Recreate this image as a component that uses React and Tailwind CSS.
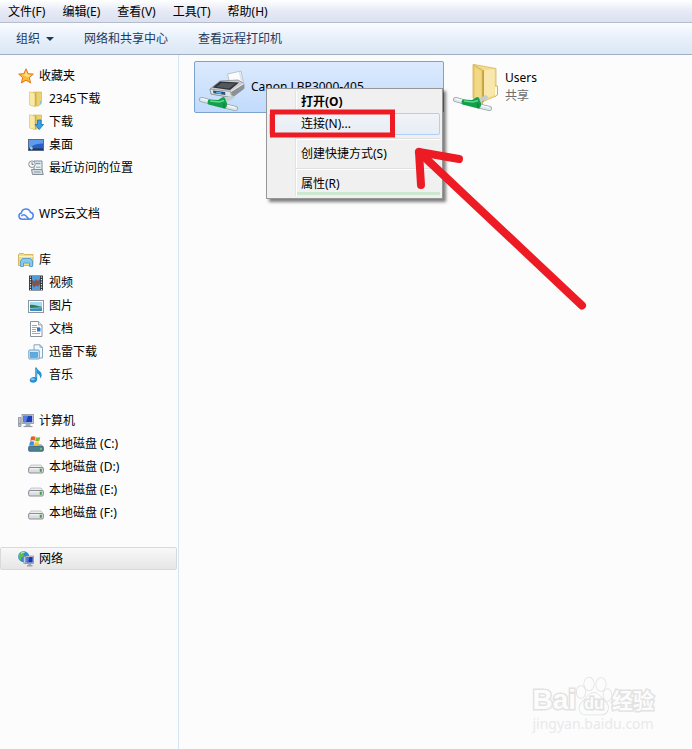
import { useState } from 'react'

const menus = ['文件(F)', '编辑(E)', '查看(V)', '工具(T)', '帮助(H)']

const groups = [
  {
    label: '收藏夹', icon: StarIcon,
    items: [
      { label: '2345下载', icon: FolderIcon },
      { label: '下载', icon: DownloadIcon },
      { label: '桌面', icon: DesktopIcon },
      { label: '最近访问的位置', icon: RecentIcon },
    ],
  },
  { label: 'WPS云文档', icon: CloudIcon, items: [] },
  {
    label: '库', icon: LibraryIcon,
    items: [
      { label: '视频', icon: VideoIcon },
      { label: '图片', icon: PictureIcon },
      { label: '文档', icon: DocumentIcon },
      { label: '迅雷下载', icon: ThunderIcon },
      { label: '音乐', icon: MusicIcon },
    ],
  },
  {
    label: '计算机', icon: ComputerIcon,
    items: [
      { label: '本地磁盘 (C:)', icon: SystemDriveIcon },
      { label: '本地磁盘 (D:)', icon: DriveIcon },
      { label: '本地磁盘 (E:)', icon: DriveIcon },
      { label: '本地磁盘 (F:)', icon: DriveIcon },
    ],
  },
  { label: '网络', icon: NetworkIcon, items: [] },
]

function Icon({ children }) {
  return <svg viewBox="0 0 16 16" className="w-4 h-4 shrink-0" aria-hidden="true">{children}</svg>
}

function StarIcon() {
  return (
    <Icon>
      <path d="M8 .8l2.1 4.9 5.2.4-4 3.5 1.3 5.3L8 12.2l-4.6 2.7 1.3-5.3-4-3.5 5.2-.4z" fill="#fdb93a" stroke="#e2761b" strokeLinejoin="round" />
      <path d="M8 3l1.300 3.500 3.700.4-3 2.400L5 7 3.500 6.800 6.800 6.400z" fill="#ffe48a" />
    </Icon>
  )
}

function FolderShape() {
  return (
    <>
      <path d="M5 1h8.500v11l-3 3H5z" fill="#ecd170" stroke="#cfae4c" strokeWidth=".6" />
      <path d="M1.500.8L7 2v13.500L1.500 14z" fill="#f9e9a4" stroke="#d9bd62" strokeWidth=".6" />
      <path d="M7 2l1.500-.8v13L7 15.500z" fill="#cfae48" />
    </>
  )
}

function FolderIcon() {
  return (
    <Icon>
      <FolderShape />
      <path d="M12.500 10v3.500" stroke="#7fc4e8" strokeWidth="1.200" />
    </Icon>
  )
}

function DownloadIcon() {
  return (
    <Icon>
      <FolderShape />
      <path d="M9.500 6h3.600v4.500h2.400L11.300 15.500 7.100 10.500h2.400z" fill="#35a3e6" stroke="#1a6fb4" strokeWidth=".8" strokeLinejoin="round" />
    </Icon>
  )
}

function DesktopIcon() {
  return (
    <Icon>
      <rect x=".5" y="2.500" width="15" height="11" fill="#2a62c4" stroke="#5b6a82" />
      <path d="M1 3h14v3.500C9 6 5 8.500 1 10.500z" fill="#5f9bea" />
      <path d="M1 12.200h14" stroke="#1b3163" strokeWidth="1.500" />
      <circle cx="3.200" cy="11" r="1.400" fill="#7fd3f3" />
      <path d="M3 11h1.500v1.500H3z" fill="#f1c64a" />
    </Icon>
  )
}

function RecentIcon() {
  return (
    <Icon>
      <path d="M6 1h8v10H6z" fill="#eef3f8" stroke="#7d8996" />
      <path d="M8 3.500h4.500" stroke="#6aa5d6" strokeWidth="1.500" />
      <path d="M8 7.200h4.500" stroke="#79b56f" />
      <path d="M3.500 9.500h10.300l1.500 5H4.500z" fill="#d5dbe1" stroke="#858d96" />
      <path d="M6 12h6.500" stroke="#8d98a4" />
      <circle cx="4" cy="4.200" r="3.300" fill="#f4f6f8" stroke="#8a939d" />
      <path d="M4 2.200v2.200h1.700" stroke="#54606c" strokeWidth=".8" fill="none" />
    </Icon>
  )
}

function CloudIcon() {
  return (
    <Icon>
      <path d="M6.500 13.200H4a3.200 3.200 0 0 1-.6-6.300 4.600 4.600 0 0 1 9-.6 3.500 3.500 0 0 1-.2 6.900c-1.500 0-2.200-.8-3-1.900-1-1.400-1.900-2.600-3.400-2.600-1.300 0-2 .7-2.300 1.600" fill="none" stroke="#4a86ec" strokeWidth="1.500" strokeLinejoin="round" />
      <path d="M6 13.200h5" stroke="#4a86ec" strokeWidth="1.500" />
    </Icon>
  )
}

function LibraryIcon() {
  return (
    <Icon>
      <path d="M.5 2.500L1.500 1.500h4l1 1h8.500v11H.5z" fill="#f2dc85" stroke="#cba94a" strokeWidth=".8" />
      <path d="M1 4.500h14" stroke="#fff3bd" />
      <path d="M2.500 14.500V9L4.500 6.500h8L14.500 9v5.500h-3V11H5.500v3.500z" fill="#86c9ee" stroke="#4a97c9" strokeWidth=".8" />
    </Icon>
  )
}

function VideoIcon() {
  return (
    <Icon>
      <rect x="1" y=".5" width="14" height="15" fill="#33373d" />
      <rect x="4" y="1" width="8" height="6.500" fill="#4d9fdb" />
      <rect x="4" y="8.500" width="8" height="6.500" fill="#4d9fdb" />
      <path d="M4 5l3 1 1-2 1.500 2L12 4v3.500H4zM4 9h8l-2 2.500-2-1-2 2z" fill="#8c5044" />
      <path d="M2.500 1.500v14M13.500 1.500v14" stroke="#e8eaec" strokeWidth="1.200" strokeDasharray="1.200 1.300" />
    </Icon>
  )
}

function PictureIcon() {
  return (
    <Icon>
      <rect x=".5" y="2.500" width="15" height="12" fill="#fff" stroke="#8d969f" />
      <rect x="2" y="4" width="12" height="9" fill="#a6dbf6" />
      <path d="M2 7c3-.8 7 1 12 1.800V10H2z" fill="#2f7d4d" />
      <path d="M2 10h12v3H2z" fill="#3c8ec2" />
      <path d="M2 10.500l12-.8" stroke="#8ed0d8" strokeWidth=".8" />
    </Icon>
  )
}

function DocumentIcon() {
  return (
    <Icon>
      <path d="M2.500.5h8l3.500 3.500v11.500H2.500z" fill="#fff" stroke="#8a939c" />
      <path d="M10.500.5V4H14" fill="#dfe6ec" stroke="#8a939c" strokeWidth=".8" />
      <path d="M4 4.500h5M4 6.500h8M4 8.500h4M4 10.500h4M4 12.500h8" stroke="#9fa9b3" />
      <rect x="9" y="7" width="3.500" height="3.500" fill="#2e78cc" />
    </Icon>
  )
}

function ThunderIcon() {
  return (
    <Icon>
      <path d="M6 .8h6l2.500 2.500V14H6z" fill="#f2f8fd" stroke="#7b9dbb" strokeWidth=".9" />
      <path d="M12 .8v2.500h2.500" fill="none" stroke="#7b9dbb" strokeWidth=".8" />
      <rect x=".8" y="6" width="10.500" height="9" rx=".8" fill="#d3e9f8" stroke="#6c96b8" strokeWidth=".9" />
      <rect x="2.500" y="8.500" width="7" height="4.800" fill="#58ade6" stroke="#3e8cc8" strokeWidth=".6" />
    </Icon>
  )
}

function MusicIcon() {
  return (
    <Icon>
      <path d="M7.200.5h1.500c.5 2.700 5.300 4 5 7.700-.2 1.700-1 2.700-1.800 3.200.6-2.700-.9-4.200-2.700-5v6c0 2-2 3.300-4.200 3.300-1.900 0-3.300-1-3.300-2.500 0-1.800 2-3.200 4.200-3.200.5 0 1 .1 1.300.3z" fill="#2b8fd3" />
      <path d="M8.200 2v8.500" stroke="#8bcdf2" strokeWidth=".6" />
      <ellipse cx="4.800" cy="12.300" rx="2" ry="1" fill="#82cdf5" />
    </Icon>
  )
}

function ComputerIcon() {
  return (
    <Icon>
      <path d="M.5 4.500h2.500v9H.5z" fill="#bfc5cc" stroke="#7d858e" strokeWidth=".7" />
      <path d="M1.700 10v1.500" stroke="#4fae48" />
      <rect x="4" y="1.500" width="11.500" height="9" fill="#d6dade" stroke="#8b939b" strokeWidth=".8" />
      <rect x="5.200" y="2.700" width="9" height="6.600" fill="#1d3fb5" />
      <path d="M5.200 2.700h4.800L8 9.300H5.200z" fill="#587fe0" />
      <path d="M8 10.800h4l.8 2.400H7z" fill="#a8afb6" />
      <path d="M5.500 13.600h9" stroke="#8b939b" />
    </Icon>
  )
}

function DriveIcon() {
  return (
    <Icon>
      <path d="M3 6h10l2.500 3.500H.5z" fill="#eceef0" stroke="#a3a8ad" strokeWidth=".6" />
      <rect x=".6" y="8.500" width="14.800" height="5.500" rx="1.300" fill="#d9dce0" stroke="#7f858b" strokeWidth=".9" />
      <path d="M2 9.800h9" stroke="#f8f9fa" />
      <rect x="11.800" y="9.800" width="2" height="3" fill="#36a834" />
    </Icon>
  )
}

function SystemDriveIcon() {
  return (
    <Icon>
      <path d="M2.500 8h11l2 3H.5z" fill="#a9c3cf" />
      <rect x=".6" y="10.300" width="14.800" height="5" rx="1.200" fill="#4f7f95" stroke="#395c6d" strokeWidth=".8" />
      <rect x="12" y="11.800" width="2" height="2" fill="#5fd148" />
      <path d="M3 .8C4.700-.2 6.200.2 7.500.8l-.9 4c-1.500-.6-2.900-.6-4.300.1z" fill="#ee5a2b" />
      <path d="M8 1.200c1.500.6 2.800.5 4.300-.2l-1 4c-1.500.7-2.800.6-4.200 0z" fill="#7dbb35" />
      <path d="M2 5.700c1.500-.7 2.900-.6 4.300 0l-.9 3.700c-1.500-.6-2.800-.6-4.200.1z" fill="#3c8ee0" />
      <path d="M6.900 5.900c1.400.6 2.700.7 4.200 0l-.9 3.700c-1.500.7-2.800.6-4.200 0z" fill="#f8c52c" />
    </Icon>
  )
}

function NetworkIcon() {
  return (
    <Icon>
      <circle cx="5.700" cy="5.700" r="5.500" fill="#2f86d6" />
      <path d="M1 3c2-2.800 5-3 6.500-2.500L5.500 3 6 4.500 3.500 6.500 3 10C.5 8 .3 5 1 3z" fill="#5cc04a" />
      <path d="M3 2.500c1-1 2.500-1.300 3.500-1.200" stroke="#d9f1ff" fill="none" />
      <rect x="5.800" y="5.500" width="3" height="7" fill="#c9ced4" stroke="#858c94" strokeWidth=".6" />
      <rect x="7.500" y="5" width="8.100" height="7.500" fill="#d5d9dd" stroke="#7e868e" strokeWidth=".7" />
      <rect x="8.500" y="6" width="6.200" height="5.500" fill="#1c36b4" />
      <path d="M8.500 6h3l-1.200 5.500H8.500z" fill="#4c6fd8" />
      <path d="M10.500 12.500h2.500v1.500h1.500v1.500H9V14h1.500z" fill="#9aa1a8" />
    </Icon>
  )
}

// Pipe with a green sleeve that marks a shared resource
function SharePipe() {
  return (
    <>
      <path d="M2.500 36.500l9 2.500M26 43l10.500 2.500" stroke="#93a5aa" strokeWidth="5" strokeLinecap="round" />
      <path d="M2.500 36.500l9 2.500M26 43l10.500 2.500" stroke="#dde7e9" strokeWidth="3.500" strokeLinecap="round" />
      <path d="M3 35.800l8 2.200M28 42.500l8 2" stroke="#fff" strokeLinecap="round" />
      <path d="M25 37c4-.5 7-1.500 9-4" stroke="#c3ced1" strokeWidth="4" fill="none" />
      <path d="M10 36.500l9 .5 5-3c1.500 0 3 1.500 2.500 3l1.500 3c.5 3-1 6-3 5.500L9.500 41.500c-1.500-1-1-4.500.5-5z" fill="#13a04c" />
      <path d="M11 38l9 1 5-1.500" stroke="#5fd88a" strokeWidth="1.500" fill="none" />
      <path d="M25 40.500v4.500" stroke="#0b7a36" />
    </>
  )
}

function PrinterIcon() {
  return (
    <svg viewBox="0 0 48 48" className="w-12 h-12 shrink-0" aria-hidden="true">
      <path d="M26 20L30 17 28.500 11 42 8l2.500 12-6 3z" fill="#fbfcfd" stroke="#aeb6bd" strokeWidth=".8" />
      <path d="M40.500 9L43 19.500" stroke="#dde3e9" strokeWidth="1.500" />
      <path d="M11 26l10-8 18-1 6 3.500v5L33 34.500 12 31z" fill="#c9cdd1" stroke="#7d8388" strokeWidth=".7" />
      <path d="M13.500 24.500L21 18.500l19 1-9 7.500z" fill="#303338" />
      <path d="M17 24l5.500-4 14 .5-6.500 5z" fill="#54585d" />
      <path d="M11 26l20.500 2.500L33 34.500 12 31z" fill="#dfe3e6" stroke="#868c92" strokeWidth=".7" />
      <path d="M14 27.500l12 1.500.5 3-12-1.800z" fill="#28527d" />
      <path d="M17 28.700l5 .6.300 1.700-5-.7z" fill="#5db6ee" />
      <path d="M32 28.500l13-8v5L33 34.500z" fill="#8c9196" />
      <path d="M32 28.500l13-8" stroke="#eef0f2" />
      <SharePipe />
    </svg>
  )
}

function SharedFolderIcon() {
  return (
    <svg viewBox="0 0 48 48" className="w-12 h-12 shrink-0" aria-hidden="true">
      <path d="M21 1.500l22 4V33l-14 6z" fill="#f3dc8c" stroke="#d6b75c" strokeWidth=".8" />
      <path d="M31 7.500l10.500-1.500v26L31 36z" fill="#f8e8ae" />
      <path d="M20 1.500l9.500 5.500v34L20 35z" fill="#eccc6f" stroke="#d2b050" strokeWidth=".8" />
      <path d="M22 4.500l6 3.500v30l-6-4z" fill="#f2d985" />
      <path d="M29.500 7v34l1.500-3V7.500z" fill="#c79f3d" />
      <path d="M42 23h2.500v9L42 33.500" fill="#fffadf" stroke="#d3b252" />
      <SharePipe />
    </svg>
  )
}

function NavItem({ item, nested, active, onSelect }) {
  const ItemIcon = item.icon
  return (
    <button
      onClick={() => onSelect(item.label)}
      className={`flex items-center gap-[5px] w-full h-[23px] text-left rounded-[2px] border ${nested ? 'pl-[27px]' : 'pl-[17px]'} ${active ? 'border-[#d9d9d9] bg-linear-to-b from-[#f8f8f8] to-[#e6e6e6]' : 'border-transparent'}`}
    >
      <ItemIcon />
      <span>{item.label}</span>
    </button>
  )
}

function MenuItem({ children, className = '' }) {
  return (
    <button role="menuitem" className={`block w-full h-[22px] pl-[31px] text-left border rounded-[2px] ${className || 'border-transparent'}`}>
      {children}
    </button>
  )
}

function MenuDivider() {
  return (
    <div className="h-2 pl-[27px] py-[3px]" role="separator">
      <div className="h-[2px] bg-white border-t border-[#e0e0e0]" />
    </div>
  )
}

function ContextMenu() {
  return (
    <div role="menu" className="absolute left-[71px] top-[26px] w-[177px] p-[2px] pb-[3px] bg-[#f0f0f0] border border-[#979797] shadow-[3px_3px_3px_#00000080]">
      {/* Icon gutter line */}
      <div className="absolute left-[28px] top-[2px] bottom-[2px] w-[2px] bg-white border-l border-[#e2e3e3]" />
      <div className="relative">
        <MenuItem><b>打开(O)</b></MenuItem>
        <MenuItem className="border-[#aecff7] bg-linear-to-b from-[#f1f4f8] to-[#e7edf5]">连接(N)...</MenuItem>
        <MenuDivider />
        <MenuItem>创建快捷方式(S)</MenuItem>
        <MenuDivider />
        <MenuItem>属性(R)</MenuItem>
        <div className="absolute left-[28px] right-0 bottom-0 h-[3px] bg-[#cce8cf]" />
      </div>
    </div>
  )
}

function Watermark() {
  return (
    <div className="absolute right-[38px] bottom-[17px] text-[#fcfcfc] font-bold">
      <div className="flex items-end h-10 [-webkit-text-stroke:3px_#e2e2e2] [paint-order:stroke_fill]">
        <span className="text-[28px] leading-8 font-['Liberation_Sans',sans-serif]">Bai</span>
        <div className="relative w-9 h-10">
          <svg viewBox="0 0 36 40" className="w-9 h-10" fill="#fcfcfc" stroke="#e0e0e0" strokeWidth="1.500" aria-hidden="true">
            <ellipse cx="5" cy="16" rx="4.300" ry="6" />
            <ellipse cx="13" cy="8" rx="4.800" ry="6.500" />
            <ellipse cx="25" cy="8.500" rx="4.800" ry="6.500" />
            <ellipse cx="31.500" cy="19" rx="4" ry="6" />
            <path d="M18 17c5 0 7 5 11 8.500 5 4 4 13-4 13H10c-8 0-8-8.500-3.500-12.500C11 22 12 17 18 17z" />
          </svg>
          <span className="absolute inset-x-0 bottom-0 text-center text-base leading-6 font-['Liberation_Sans',sans-serif]">du</span>
        </div>
        <span className="text-[21px] leading-8">经验</span>
      </div>
      <p className="text-sm leading-4 font-normal text-[#e9e9e9]">jingyan.baidu.com</p>
    </div>
  )
}

export default function App() {
  const [selected, setSelected] = useState('网络')

  return (
    <div className="relative flex flex-col min-h-screen overflow-hidden bg-[#fcfcfc] text-black text-xs leading-5 font-['Noto_Sans','Noto_Sans_CJK_SC',sans-serif]">
      <nav className="flex gap-px h-[23px] pt-px items-center bg-linear-to-b from-white via-[#e6eaf5] to-[#dbe1f0] border-b border-[#b6bccc]">
        {menus.map(m => <button key={m} className="px-2">{m}</button>)}
      </nav>

      {/* Toolbar */}
      <div className="flex h-8 items-center gap-[30px] px-4 text-[#1e395b] bg-linear-to-b from-[#f9fcff] via-[#e7f0fa] to-[#dce7f5] border-b border-[#a0afc3]">
        <button className="flex items-center gap-[6px]">
          组织
          <svg viewBox="0 0 8 4" className="w-2 h-1" aria-hidden="true"><path d="M0 0h8L4 4z" fill="#1e395b" /></svg>
        </button>
        <button>网络和共享中心</button>
        <button>查看远程打印机</button>
      </div>

      <div className="flex flex-1">
        <aside className="w-[179px] shrink-0 pt-[9px] pr-[1px] border-r border-[#d6e5f5]">
          <ul className="flex flex-col gap-[23px]">
            {groups.map(g => (
              <li key={g.label}>
                <NavItem item={g} active={selected === g.label} onSelect={setSelected} />
                {g.items.map(i => (
                  <NavItem key={i.label} item={i} nested active={selected === i.label} onSelect={setSelected} />
                ))}
              </li>
            ))}
          </ul>
        </aside>

        <main className="flex flex-1 items-start gap-1 pl-[15px] pt-[6px]">
          <div className="relative flex items-center gap-1 w-[250px] h-[52px] px-1 border border-[#7da2ce] rounded-[2px] bg-linear-to-b from-[#dceafc] to-[#c1dbfc]">
            <PrinterIcon />
            <span>Canon LBP3000-405</span>
            <ContextMenu />
          </div>
          <div className="flex items-center gap-1 h-[52px] px-1 border border-transparent">
            <SharedFolderIcon />
            <div className="leading-[18px]">
              <p>Users</p>
              <p className="text-[#6d6d6d]">共享</p>
            </div>
          </div>
        </main>
      </div>

      <Watermark />

      {/* Red pen marks */}
      <svg viewBox="0 0 320 210" className="absolute left-[267px] top-[106px] w-[320px] h-[210px] pointer-events-none" fill="none" stroke="#ed1c24" aria-hidden="true">
        <path d="M5.500 6h120v23h-120z" strokeWidth="5" />
        <path d="M315 199.500L152 46" strokeWidth="8" strokeLinecap="round" />
        <path d="M154 79L152 46l40 7" strokeWidth="8" strokeLinecap="round" strokeLinejoin="round" />
      </svg>
    </div>
  )
}
